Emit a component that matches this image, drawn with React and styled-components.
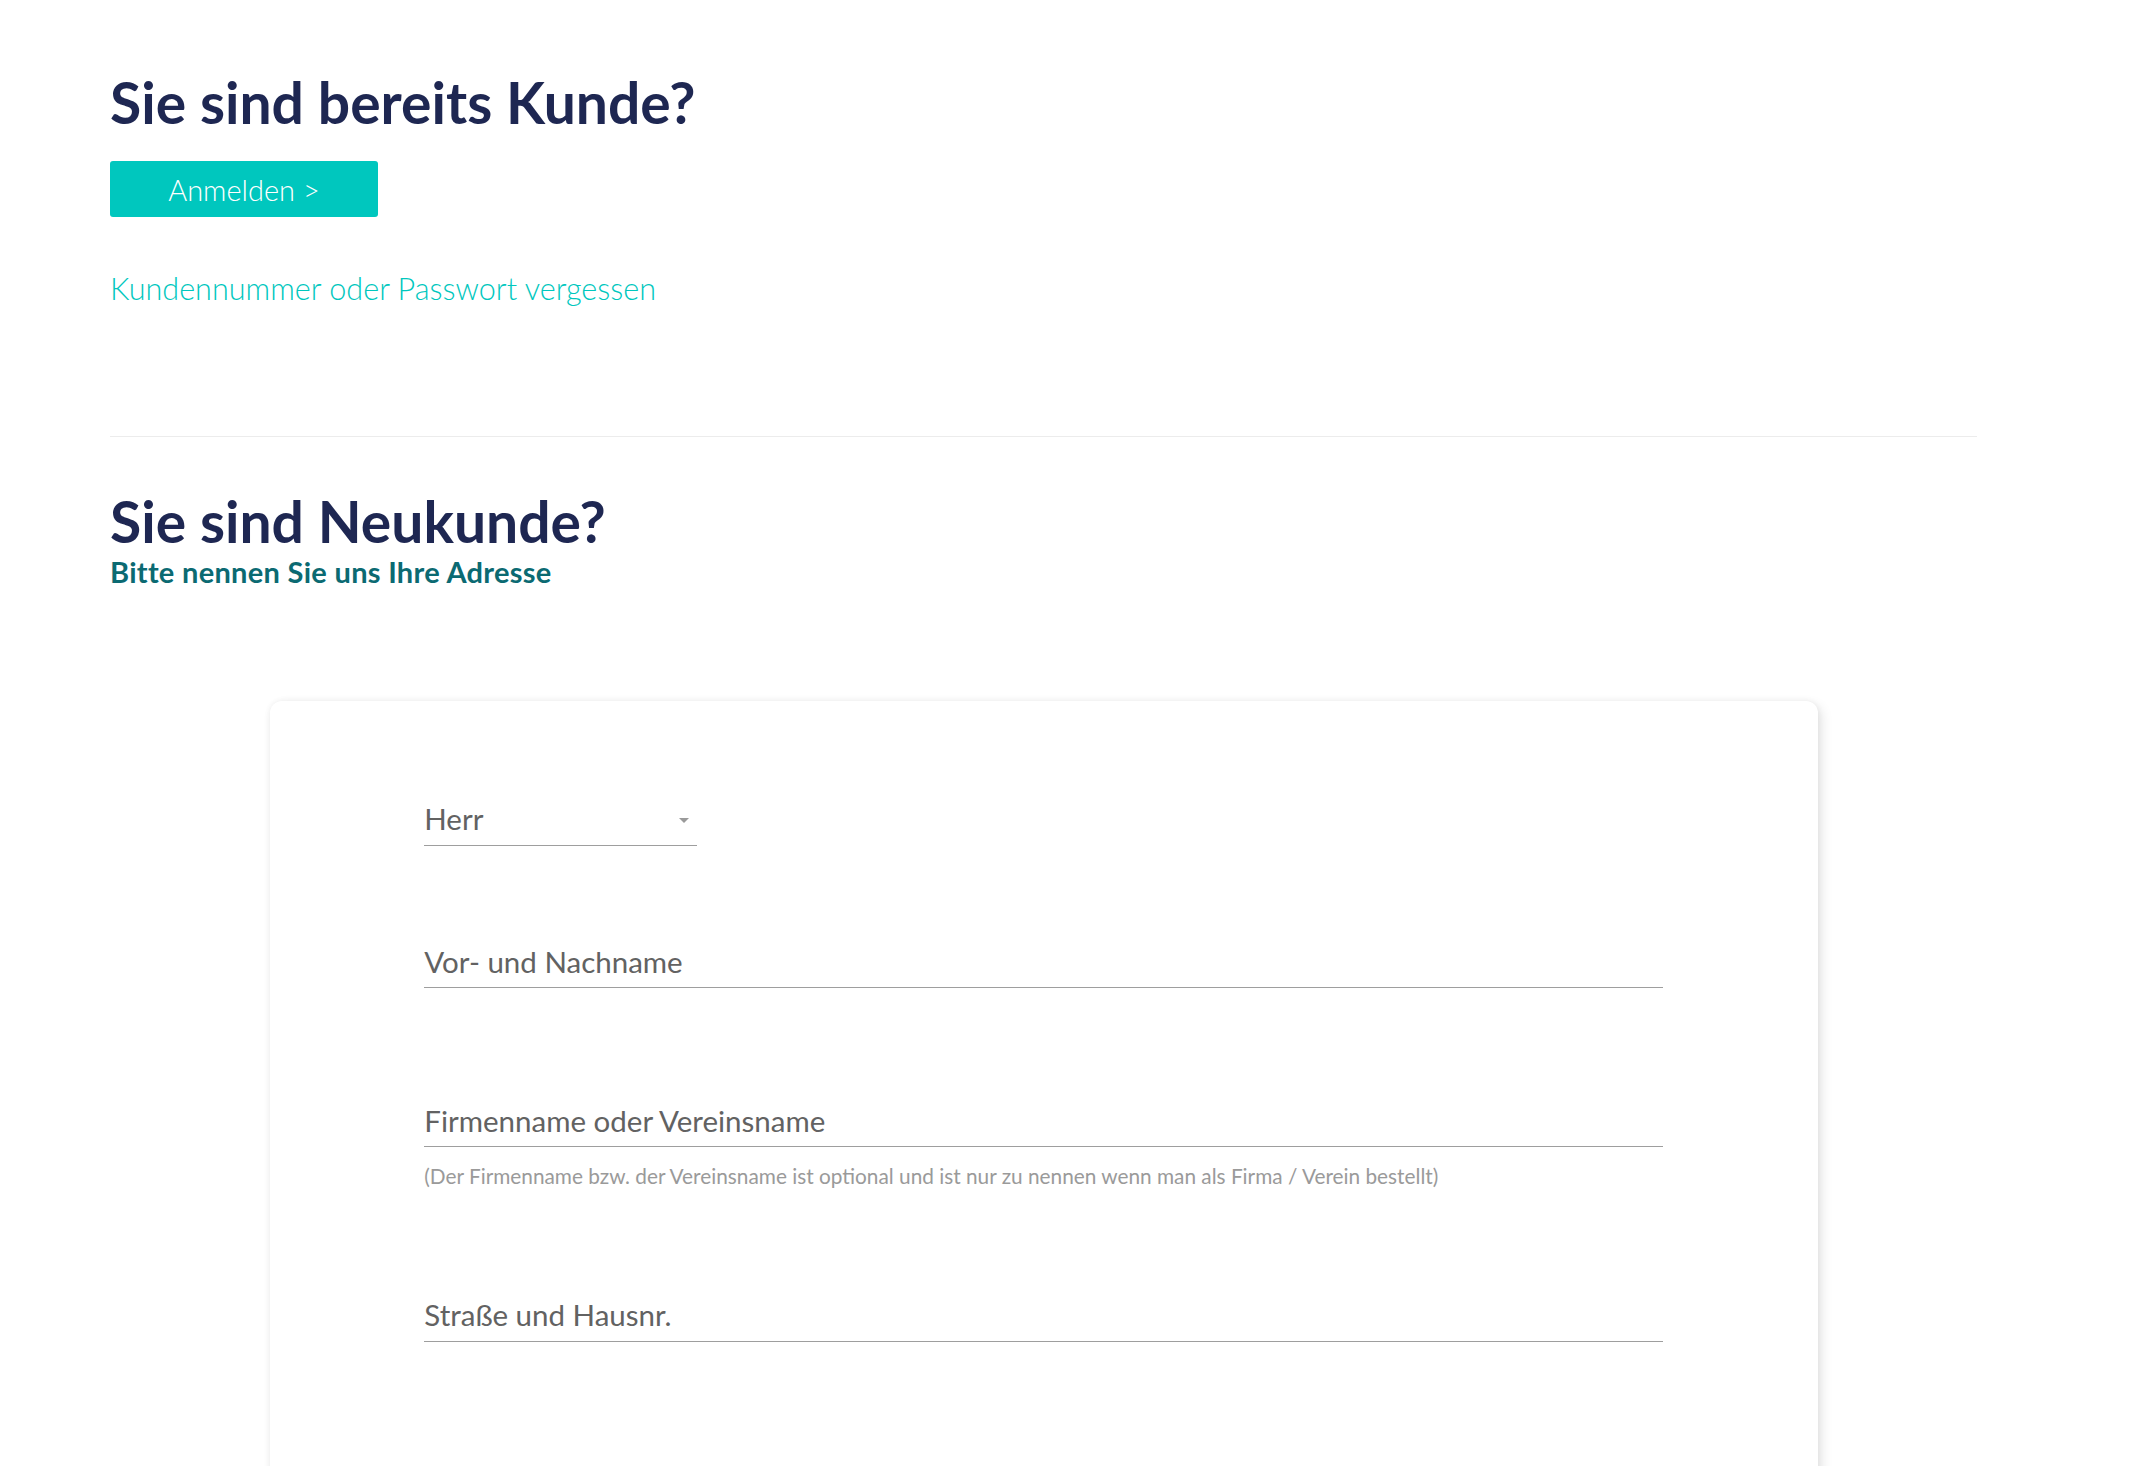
import styled, { createGlobalStyle } from "styled-components";

const GlobalStyle = createGlobalStyle`
  * {
    box-sizing: border-box;
  }

  body {
    margin: 0;
    background: #ffffff;
    font-family: Lato, "Open Sans", sans-serif;
  }
`;

const Page = styled.main`
  padding: 68px 163px 80px 110px;
`;

const Section = styled.section`
  display: flex;
  flex-direction: column;
  align-items: flex-start;
`;

const Title = styled.h1`
  margin: 0;
  color: #1e2752;
  font-size: 57px;
  font-weight: 700;
  line-height: 1.2;
`;

const Subtitle = styled.h2`
  margin: 0;
  color: #0b6a72;
  font-size: 29px;
  font-weight: 700;
  letter-spacing: 0.3px;
  line-height: 1.16;
`;

const LoginButton = styled.button`
  margin-top: 25px;
  width: 268px;
  height: 56px;
  border: none;
  border-radius: 3px;
  background-color: #00c7be;
  color: #ffffff;
  font-family: inherit;
  font-size: 29px;
  font-weight: 300;
  cursor: pointer;
`;

const ForgotLink = styled.a`
  margin-top: 54px;
  color: #00c7be;
  font-size: 30.6px;
  font-weight: 300;
  line-height: 1.2;
  text-decoration: none;
  cursor: pointer;
`;

const Divider = styled.hr`
  margin: 128px 0 50px;
  border: none;
  border-top: 1px solid #ececec;
`;

const Card = styled.div`
  max-width: 1548px;
  margin: 112px auto 0;
  padding: 100px 0 260px;
  background: #ffffff;
  border-radius: 12px;
  box-shadow: 0 0 6px rgba(0, 0, 0, 0.06), 4px 4px 12px rgba(0, 0, 0, 0.1);
`;

const Form = styled.form`
  width: 80%;
  margin: 0 auto;
  display: flex;
  flex-direction: column;
`;

const Field = styled.div`
  margin-top: ${(p) => p.$space || 0}px;
  width: ${(p) => (p.$narrow ? "273px" : "100%")};
  display: flex;
  align-items: center;
  justify-content: space-between;
  padding-bottom: 8px;
  border-bottom: 1px solid #9e9e9e;
  color: #626262;
  font-size: 29.5px;
  font-weight: 400;
  line-height: 1.2;
`;

const Arrow = styled.svg`
  margin-right: 8px;
  margin-top: 4px;
`;

const Hint = styled.p`
  margin: 17px 0 0;
  color: #9a9a9a;
  font-size: 20.8px;
  line-height: 1.2;
`;

const fields = [
  { label: "Vor- und Nachname", space: 98 },
  {
    label: "Firmenname oder Vereinsname",
    space: 115,
    hint: "(Der Firmenname bzw. der Vereinsname ist optional und ist nur zu nennen wenn man als Firma / Verein bestellt)",
  },
  { label: "Straße und Hausnr.", space: 108 },
];

export default function App() {
  return (
    <>
      <GlobalStyle />
      <Page>
        <Section>
          <Title>Sie sind bereits Kunde?</Title>
          <LoginButton>Anmelden &gt;</LoginButton>
          <ForgotLink>Kundennummer oder Passwort vergessen</ForgotLink>
        </Section>

        <Divider />

        <Section>
          <Title>Sie sind Neukunde?</Title>
          <Subtitle>Bitte nennen Sie uns Ihre Adresse</Subtitle>
        </Section>

        <Card>
          <Form>
            <Field $narrow>
              <span>Herr</span>
              <Arrow width="10" height="5" viewBox="0 0 10 5">
                <path d="M0 0 L10 0 L5 5 Z" fill="#9a9a9a" />
              </Arrow>
            </Field>
            {fields.map((f) => (
              <div key={f.label}>
                <Field $space={f.space}>
                  <span>{f.label}</span>
                </Field>
                {f.hint && <Hint>{f.hint}</Hint>}
              </div>
            ))}
          </Form>
        </Card>
      </Page>
    </>
  );
}
